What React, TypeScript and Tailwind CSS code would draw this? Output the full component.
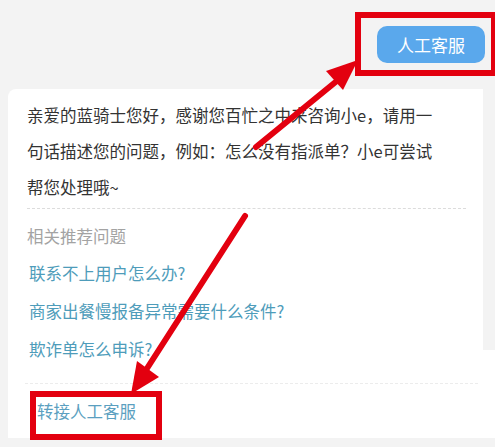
import React from "react";

export default function App() {
  const font = { fontFamily: '"Noto Sans CJK SC", "Noto Sans", sans-serif' };
  return (
    <div className="relative w-[495px] h-[447px] overflow-hidden bg-[#f3f3f3]" style={font}>
      {/* header */}
      <div className="h-[89px] flex items-start justify-end pt-[26px] pr-[10px]">
        <button className="h-[37px] w-[108px] rounded-[10px] bg-[#5aa8ec] text-white text-[17px] flex items-center justify-center">
          人工客服
        </button>
      </div>

      {/* card */}
      <div className="ml-[8px] bg-white rounded-tl-[8px]">
        <div className="flex">
          <div className="flex-1 rounded-tr-[8px]">
            <div className="pl-[19px] pr-[17px] pt-[8px]">
              <p className="text-[16.5px] leading-[36px] text-[#333333]">
                亲爱的蓝骑士您好，感谢您百忙之中来咨询小e，请用一
                <br />
                句话描述您的问题，例如：怎么没有指派单？小e可尝试
                <br />
                帮您处理哦~
              </p>
              <div className="mt-[3px] border-t border-dashed border-[#dcdcdc]" />
              <div className="mt-[9px] text-[16.5px] leading-[36px] text-[#a3a3a3]">相关推荐问题</div>
              <div className="pl-[2px] text-[16.5px] leading-[38px] text-[#4e9cba]">
                <div>联系不上用户怎么办?</div>
                <div>商家出餐慢报备异常需要什么条件?</div>
                <div>欺诈单怎么申诉?</div>
              </div>
            </div>
          </div>
          <div className="w-[12px] h-[261px] bg-[#f3f3f3] self-start" />
        </div>
        <div className="mt-[15px] border-t border-dashed border-[#ececec] mx-[17px]" />
        <div className="pl-[29px] pt-[9px] pb-[9px] text-[16.5px] leading-[36px] text-[#5b9fc0]">转接人工客服</div>
      </div>

      {/* annotations */}
      <svg className="absolute left-0 top-0" width="495" height="447" viewBox="0 0 495 447">
        <rect x="358" y="15" width="136" height="58" fill="none" stroke="#e3000f" strokeWidth="6" />
        <rect x="33" y="394" width="126" height="43" fill="none" stroke="#e3000f" strokeWidth="6" />
        <line x1="256" y1="147" x2="338" y2="80" stroke="#e3000f" strokeWidth="6" strokeLinecap="round" />
        <polygon points="358,60 326,71 343,90" fill="#e3000f" />
        <line x1="245" y1="216" x2="146" y2="370" stroke="#e3000f" strokeWidth="6" strokeLinecap="round" />
        <polygon points="131,394 137,361 159,377" fill="#e3000f" />
      </svg>
    </div>
  );
}
